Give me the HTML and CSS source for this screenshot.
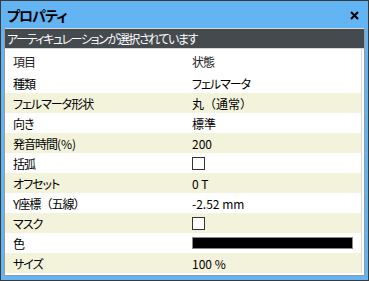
FILE: index.html
```html
<!DOCTYPE html>
<html lang="ja">
<head>
    <meta charset="UTF-8">
    <title>プロパティ</title>
    <link rel="stylesheet" href="styles.css">
</head>
<body>
    <div class="window">
        <div class="title-bar">
            <span class="title">プロパティ</span>
            <svg class="close" width="9" height="9" viewBox="0 0 9 9">
                <path d="M1 1 L8 8 M8 1 L1 8" stroke="#000" stroke-width="2"/>
            </svg>
        </div>
        <div class="panel">
            <div class="message">アーティキュレーションが選択されています</div>
            <div class="props">
                <div class="row head"><span class="jp">項目</span><span class="jp">状態</span></div>
                <div class="row"><span class="jp">種類</span><span class="jp">フェルマータ</span></div>
                <div class="row alt"><span class="jp">フェルマータ形状</span><span>丸<i class="paren">（</i>通常<i class="paren">）</i></span></div>
                <div class="row"><span class="jp">向き</span><span>標準</span></div>
                <div class="row alt"><span class="jp">発音時間<i class="latin">(%)</i></span><span>200</span></div>
                <div class="row"><span class="jp">括弧</span><span class="check"></span></div>
                <div class="row alt"><span class="jp">オフセット</span><span>0 T</span></div>
                <div class="row"><span class="jp">Y座標<i class="paren">（</i>五線<i class="paren">）</i></span><span>-2.52 mm</span></div>
                <div class="row alt"><span class="jp">マスク</span><span class="check"></span></div>
                <div class="row"><span class="jp">色</span><span class="swatch"></span></div>
                <div class="row alt"><span class="jp">サイズ</span><span>100 %</span></div>
            </div>
        </div>
    </div>
</body>
</html>
```

FILE: styles.css
```css
body {
    margin: 0;
    font-family: "Noto Sans CJK JP", "Noto Sans", sans-serif;
    font-feature-settings: "palt";
    font-size: 12px;
    color: #000;
}

.window {
    width: 369px;
    height: 281px;
    box-sizing: border-box;
    border: 1px solid #3a3a3a;
    background-color: #62b4f2;
    padding: 0 3px 4px 3px;
    display: flex;
    flex-direction: column;
}

.title-bar {
    height: 27px;
    display: flex;
    align-items: center;
    justify-content: space-between;
    padding: 0 6px 0 3px;
}

.title {
    font-size: 14px;
    font-weight: bold;
    letter-spacing: -1px;
}

.close {
    margin-top: 2px;
}

.panel {
    flex: 1;
    background-color: #fff;
    border: 1px solid #9a9a9a;
    border-top: none;
    display: flex;
    flex-direction: column;
}

.message {
    height: 19px;
    line-height: 19px;
    background-color: #454a4f;
    color: #fff;
    border-top: 1px solid #d8d8d8;
    border-bottom: 1px solid #d8d8d8;
    padding-left: 2px;
    letter-spacing: -1.4px;
    white-space: nowrap;
    overflow: hidden;
}

.props {
    margin-right: 2px;
    border-right: 1px solid #dcdcdc;
}

.row {
    display: grid;
    grid-template-columns: 179px 1fr;
    height: 20px;
    align-items: center;
}

.row span {
    padding-left: 8px;
}

.row .jp {
    letter-spacing: -1px;
}

.paren {
    font-style: normal;
    font-feature-settings: normal;
}

.latin {
    font-style: normal;
    letter-spacing: 0;
}

.row.head {
    height: 24px;
    color: #222;
}

.row.alt {
    background-color: #f3f3dc;
}

.row .check {
    width: 11px;
    height: 11px;
    border: 1px solid #333;
    background-color: #fff;
    padding: 0;
    margin-left: 8px;
}

.row .swatch {
    height: 10px;
    padding: 0;
    margin-left: 8px;
    margin-right: 8px;
    background-color: #000;
    border: 1px solid #8a8a8a;
}
```
